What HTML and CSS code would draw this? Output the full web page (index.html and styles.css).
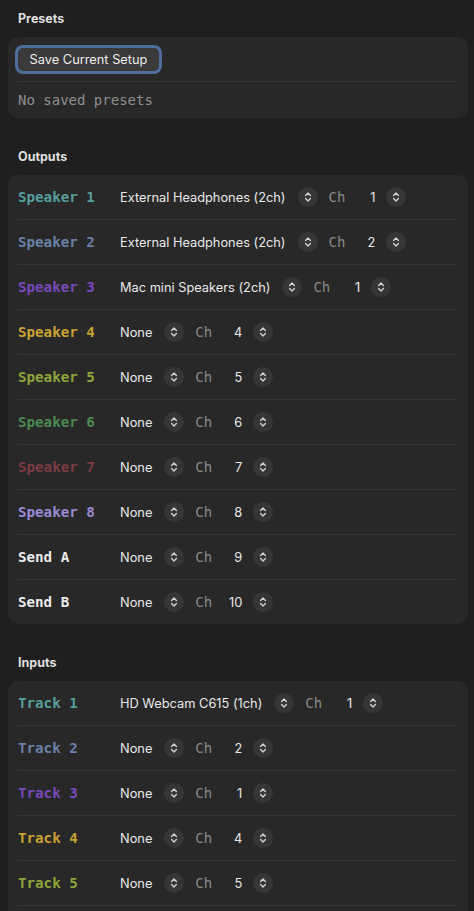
FILE: index.html
```html
<!DOCTYPE html>
<html>
<head>
<meta charset="utf-8">
<link rel="stylesheet" href="styles.css">
</head>
<body>
<svg width="0" height="0" class="defs">
  <defs>
    <symbol id="updown" viewBox="0 0 20 20">
      <path d="M7.6 8.4 L10 6 L12.4 8.4 M7.6 11.6 L10 14 L12.4 11.6" fill="none" stroke="#d2d2d2" stroke-width="1.4" stroke-linecap="round" stroke-linejoin="round"/>
    </symbol>
  </defs>
</svg>
<div class="page">
  <section class="section">
    <h2 class="section-title">Presets</h2>
    <div class="card">
      <div class="row row-btn"><button class="btn">Save Current Setup</button></div>
      <div class="row row-empty">No saved presets</div>
    </div>
  </section>

  <section class="section">
    <h2 class="section-title">Outputs</h2>
    <div class="card">
      <div class="row"><span class="label c1">Speaker 1</span><span class="device">External Headphones (2ch)</span><span class="step"><svg><use href="#updown"/></svg></span><span class="ch">Ch</span><span class="num">1</span><span class="step"><svg><use href="#updown"/></svg></span></div>
      <div class="row"><span class="label c2">Speaker 2</span><span class="device">External Headphones (2ch)</span><span class="step"><svg><use href="#updown"/></svg></span><span class="ch">Ch</span><span class="num">2</span><span class="step"><svg><use href="#updown"/></svg></span></div>
      <div class="row"><span class="label c3">Speaker 3</span><span class="device">Mac mini Speakers (2ch)</span><span class="step"><svg><use href="#updown"/></svg></span><span class="ch">Ch</span><span class="num">1</span><span class="step"><svg><use href="#updown"/></svg></span></div>
      <div class="row"><span class="label c4">Speaker 4</span><span class="device">None</span><span class="step"><svg><use href="#updown"/></svg></span><span class="ch">Ch</span><span class="num">4</span><span class="step"><svg><use href="#updown"/></svg></span></div>
      <div class="row"><span class="label c5">Speaker 5</span><span class="device">None</span><span class="step"><svg><use href="#updown"/></svg></span><span class="ch">Ch</span><span class="num">5</span><span class="step"><svg><use href="#updown"/></svg></span></div>
      <div class="row"><span class="label c6">Speaker 6</span><span class="device">None</span><span class="step"><svg><use href="#updown"/></svg></span><span class="ch">Ch</span><span class="num">6</span><span class="step"><svg><use href="#updown"/></svg></span></div>
      <div class="row"><span class="label c7">Speaker 7</span><span class="device">None</span><span class="step"><svg><use href="#updown"/></svg></span><span class="ch">Ch</span><span class="num">7</span><span class="step"><svg><use href="#updown"/></svg></span></div>
      <div class="row"><span class="label c8">Speaker 8</span><span class="device">None</span><span class="step"><svg><use href="#updown"/></svg></span><span class="ch">Ch</span><span class="num">8</span><span class="step"><svg><use href="#updown"/></svg></span></div>
      <div class="row"><span class="label cw">Send A</span><span class="device">None</span><span class="step"><svg><use href="#updown"/></svg></span><span class="ch">Ch</span><span class="num">9</span><span class="step"><svg><use href="#updown"/></svg></span></div>
      <div class="row"><span class="label cw">Send B</span><span class="device">None</span><span class="step"><svg><use href="#updown"/></svg></span><span class="ch">Ch</span><span class="num">10</span><span class="step"><svg><use href="#updown"/></svg></span></div>
    </div>
  </section>

  <section class="section">
    <h2 class="section-title">Inputs</h2>
    <div class="card card-open">
      <div class="row"><span class="label c1">Track 1</span><span class="device">HD Webcam C615 (1ch)</span><span class="step"><svg><use href="#updown"/></svg></span><span class="ch">Ch</span><span class="num">1</span><span class="step"><svg><use href="#updown"/></svg></span></div>
      <div class="row"><span class="label c2">Track 2</span><span class="device">None</span><span class="step"><svg><use href="#updown"/></svg></span><span class="ch">Ch</span><span class="num">2</span><span class="step"><svg><use href="#updown"/></svg></span></div>
      <div class="row"><span class="label c3">Track 3</span><span class="device">None</span><span class="step"><svg><use href="#updown"/></svg></span><span class="ch">Ch</span><span class="num">1</span><span class="step"><svg><use href="#updown"/></svg></span></div>
      <div class="row"><span class="label c4">Track 4</span><span class="device">None</span><span class="step"><svg><use href="#updown"/></svg></span><span class="ch">Ch</span><span class="num">4</span><span class="step"><svg><use href="#updown"/></svg></span></div>
      <div class="row"><span class="label c5">Track 5</span><span class="device">None</span><span class="step"><svg><use href="#updown"/></svg></span><span class="ch">Ch</span><span class="num">5</span><span class="step"><svg><use href="#updown"/></svg></span></div>
    </div>
  </section>
</div>
</body>
</html>
```

FILE: styles.css
```css
html, body {
  margin: 0;
  padding: 0;
  background: #1f1f1f;
}

body {
  font-family: Inter, "Liberation Sans", sans-serif;
  color: #e6e6e6;
  overflow: hidden;
}

.defs {
  position: absolute;
  width: 0;
  height: 0;
}

.page {
  padding: 11px 6px 0 8px;
}

.section + .section {
  margin-top: 31px;
}

.section-title {
  margin: 0 0 10px 10px;
  font-size: 12.5px;
  line-height: 16px;
  font-weight: 700;
  color: #dedede;
}

.card {
  background: #282828;
  border-radius: 10px;
  padding: 0 10px;
}

.card-open {
  padding-bottom: 40px;
}

.card-open .row:last-child {
  border-bottom: 1px solid #353535;
}

.row {
  height: 44px;
  display: flex;
  align-items: center;
}

.row + .row {
  border-top: 1px solid #353535;
}

.row-empty {
  height: 36px;
  font-family: "DejaVu Sans Mono", "Liberation Mono", monospace;
  font-size: 14px;
  color: #8f8f8f;
}

.btn {
  font-family: Inter, "Liberation Sans", sans-serif;
  font-size: 12.8px;
  color: #ececec;
  background: #3a3a3a;
  border: none;
  border-radius: 5px;
  height: 23px;
  width: 141px;
  padding: 0;
  box-shadow: 0 0 0 3px #4d6d9c;
}

.label {
  width: 102px;
  flex: none;
  font-family: "DejaVu Sans Mono", "Liberation Mono", monospace;
  font-size: 14.2px;
  font-weight: 700;
}

.c1 { color: #569e9e; }
.c2 { color: #6a80a8; }
.c3 { color: #7a48bd; }
.c4 { color: #c9a233; }
.c5 { color: #8ea53a; }
.c6 { color: #4b8a52; }
.c7 { color: #7b3c42; }
.c8 { color: #9a8ad6; }
.cw { color: #ececec; }

.device {
  font-size: 12.8px;
  color: #e8e8e8;
  white-space: nowrap;
}

.step {
  width: 20px;
  height: 20px;
  border-radius: 50%;
  background: #363636;
  flex: none;
  margin-left: 12px;
  display: flex;
}

.step svg {
  width: 20px;
  height: 20px;
}

.ch {
  margin-left: 11px;
  font-family: "DejaVu Sans Mono", "Liberation Mono", monospace;
  font-size: 14px;
  color: #8a8a8a;
}

.num {
  width: 30px;
  text-align: right;
  font-size: 12.8px;
  color: #e8e8e8;
}

.num + .step {
  margin-left: 11px;
}
```
